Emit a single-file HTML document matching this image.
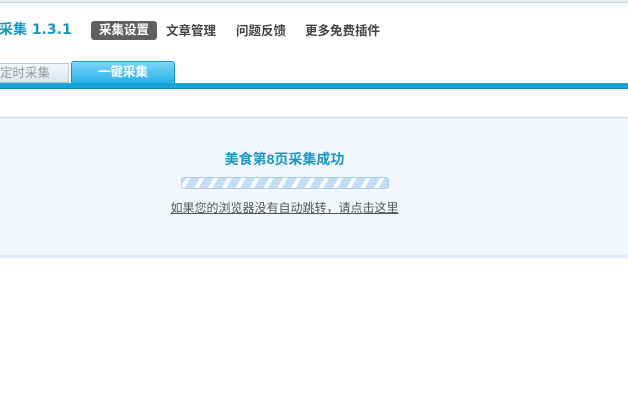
<!DOCTYPE html>
<html><head><meta charset="utf-8"><style>
body{margin:0;width:628px;height:403px;background:#fff;font-family:"Liberation Sans","Noto Sans CJK SC",sans-serif;position:relative;overflow:hidden;font-size:12px}
.a{position:absolute}
</style></head><body>
<div class="a" style="left:0;top:0;width:628px;height:2px;background:#e8edf2"></div>
<div class="a" style="left:0;top:2px;width:628px;height:1px;background:#c9d3dc"></div>
<div class="a" style="left:0;top:3px;width:628px;height:12px;background:linear-gradient(#f4f7fa,#fff)"></div>
<div class="a" style="left:-1px;top:21px;font-size:14px;font-weight:bold;color:#1a95c4;line-height:18px;font-family:'DejaVu Sans','Noto Sans CJK SC',sans-serif">采集 1.3.1</div>
<div class="a" style="left:91px;top:21px;width:66px;height:19px;background:#5f5f5f;border-radius:3px;color:#fff;font-weight:bold;font-size:12.5px;line-height:19px;text-align:center">采集设置</div>
<div class="a" style="left:166px;top:22px;color:#444;font-weight:bold;font-size:12.5px;line-height:18px">文章管理</div>
<div class="a" style="left:236px;top:22px;color:#444;font-weight:bold;font-size:12.5px;line-height:18px">问题反馈</div>
<div class="a" style="left:305px;top:22px;color:#444;font-weight:bold;font-size:12.5px;line-height:18px">更多免费插件</div>
<div class="a" style="left:-5px;top:63px;width:74px;height:20px;background:linear-gradient(#f5f8fb,#dbe5ee);border:1px solid #b9c8d4;box-sizing:border-box;color:#999;line-height:19px;padding-left:4px;font-size:12.5px">定时采集</div>
<div class="a" style="left:71px;top:61px;width:104px;height:23px;background:linear-gradient(#7fd6f6,#22aee5);border:1px solid #1595c8;border-bottom:none;border-radius:3px 3px 0 0;box-sizing:border-box;color:#fff;font-weight:bold;text-align:center;line-height:21px;font-size:12.5px">一键采集</div>
<div class="a" style="left:0;top:83px;width:628px;height:5px;background:#14a3d8;border-bottom:1px solid #0c88bd"></div>
<div class="a" style="left:0;top:116px;width:628px;height:142px;background:#f2f7fc;border-top:3px solid #dfebf6;border-bottom:3px solid #dfebf6;box-sizing:border-box"></div>
<div class="a" style="left:0;top:150px;width:569px;text-align:center;color:#1a95c4;font-weight:bold;font-size:14px;line-height:18px">美食第8页采集成功</div>
<div class="a" style="left:181px;top:177px;width:208px;height:12px;border:1px solid #a9cdee;border-radius:3px;box-sizing:border-box;background:repeating-linear-gradient(-60deg,#c4ddf6 0 8px,#fff 8px 12px)"></div>
<div class="a" style="left:0;top:200px;width:569px;text-align:center;color:#555;text-decoration:underline;font-size:12px;line-height:16px">如果您的浏览器没有自动跳转，请点击这里</div>
</body></html>
